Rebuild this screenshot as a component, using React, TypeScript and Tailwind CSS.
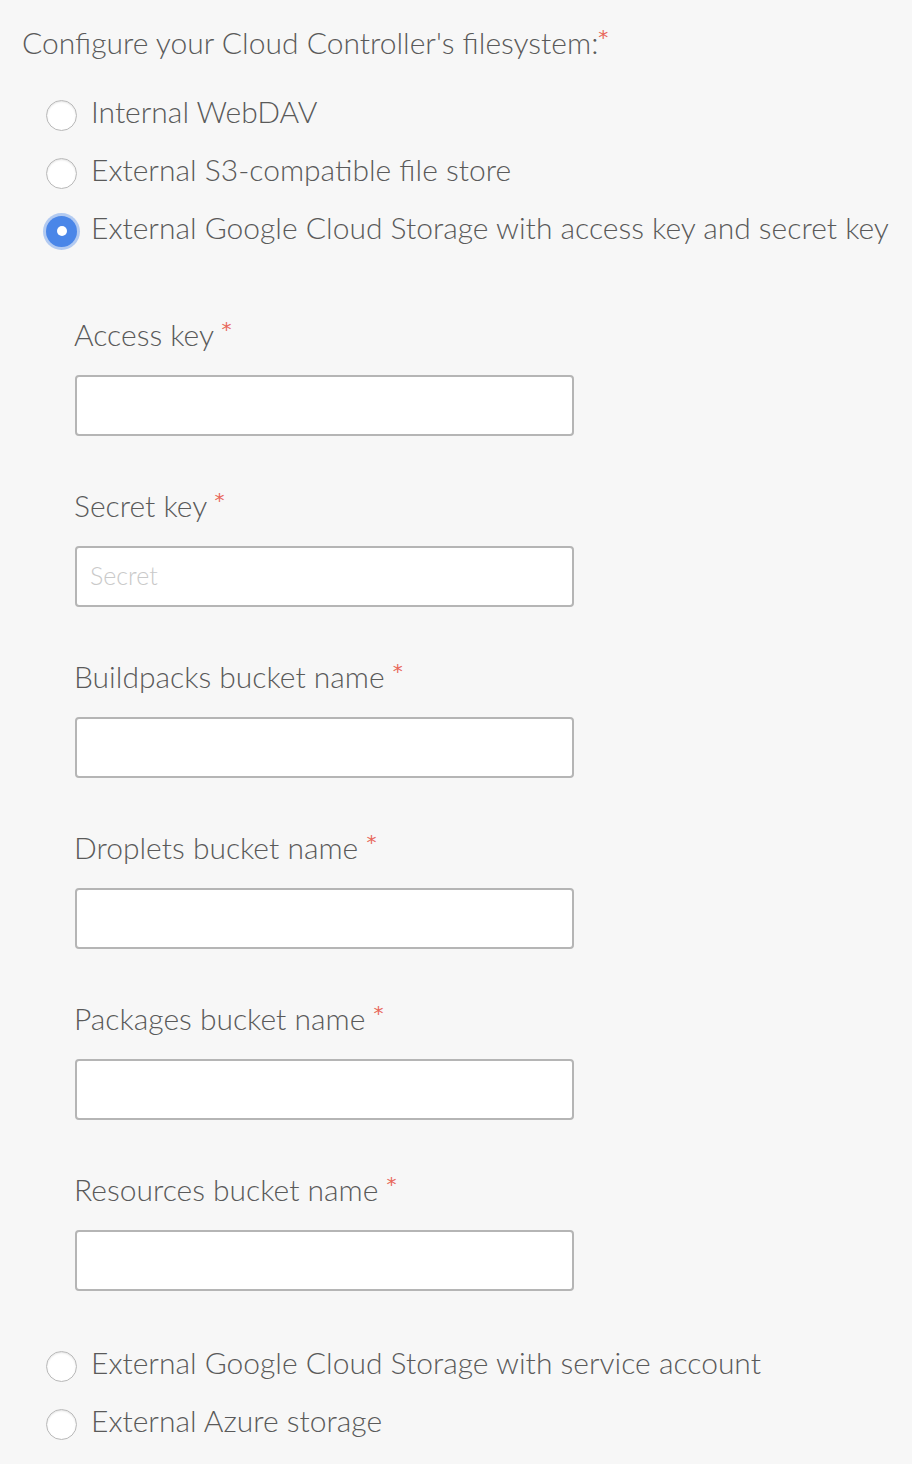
const options = [
  { label: "Internal WebDAV", checked: false },
  { label: "External S3-compatible file store", checked: false },
  { label: "External Google Cloud Storage with access key and secret key", checked: true },
];

const fields = [
  { label: "Access key", placeholder: "" },
  { label: "Secret key", placeholder: "Secret" },
  { label: "Buildpacks bucket name", placeholder: "" },
  { label: "Droplets bucket name", placeholder: "" },
  { label: "Packages bucket name", placeholder: "" },
  { label: "Resources bucket name", placeholder: "" },
];

const after = [
  { label: "External Google Cloud Storage with service account", checked: false },
  { label: "External Azure storage", checked: false },
];

function Radio({ label, checked }: { label: string; checked: boolean }) {
  return (
    <label className="flex h-[58px] items-center pl-[46px]">
      {checked ? (
        <span className="flex h-[31px] w-[31px] shrink-0 items-center justify-center rounded-full bg-[#4a86e8] ring-[3px] ring-[#4a86e8]/40">
          <span className="h-[10px] w-[10px] rounded-full bg-white" />
        </span>
      ) : (
        <span className="h-[31px] w-[31px] shrink-0 rounded-full border border-[#b9b9b9] bg-white shadow-[inset_0_1px_2px_rgba(0,0,0,0.12)]" />
      )}
      <span className="ml-[14px] -mt-[8px] h-[40px] text-[30px] leading-[40px]">{label}</span>
    </label>
  );
}

function Star() {
  return (
    <span className="relative -top-[10px] font-['DejaVu_Sans',sans-serif] font-normal text-[20px] leading-none text-[#e8675a]">
      *
    </span>
  );
}

export default function App() {
  return (
    <div className="min-h-screen bg-[#f7f7f7] pt-[22px] font-['Lato',sans-serif] font-light text-[#5a5a5a]">
      <div className="h-[40px] pl-[22px] text-[30px] leading-[40px]">
        Configure your Cloud Controller's filesystem:
        <Star />
      </div>
      <div className="mt-[24px]">
        {options.map((o) => (
          <Radio key={o.label} {...o} />
        ))}
      </div>
      <div className="mt-[56px] pl-[75px]">
        {fields.map((f) => (
          <div key={f.label} className="mb-[51px] last:mb-0">
            <div className="-ml-px h-[40px] text-[30px] leading-[36px]">
              {f.label} <Star />
            </div>
            <input
              placeholder={f.placeholder}
              className="mt-[19px] block h-[61px] w-[499px] rounded-[4px] border-2 border-[#b5b5b5] bg-white px-[13px] pb-[3px] text-[25px] text-[#5a5a5a] outline-none placeholder:text-[#c9c9c9]"
            />
          </div>
        ))}
      </div>
      <div className="mt-[46px] pb-[11px]">
        {after.map((o) => (
          <Radio key={o.label} {...o} />
        ))}
      </div>
    </div>
  );
}
